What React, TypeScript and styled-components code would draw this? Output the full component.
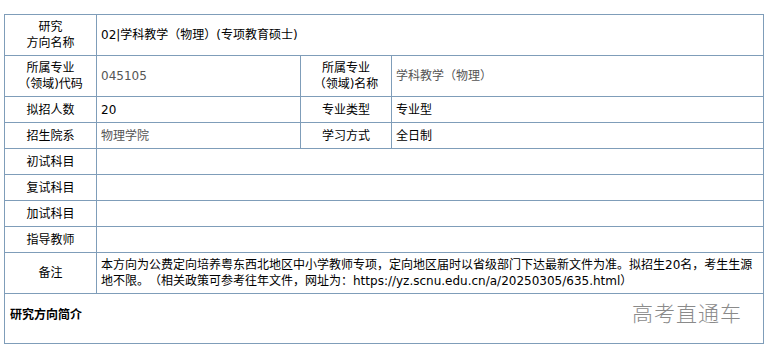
import React from 'react';
import styled, { createGlobalStyle } from 'styled-components';

const GlobalStyle = createGlobalStyle`
	html, body {
		margin: 0;
		padding: 0;
		background: #ffffff;
	}
	body {
		font-family: Verdana, 'DejaVu Sans', 'Noto Sans CJK SC', sans-serif;
		font-size: 12px;
		color: #000000;
		text-spacing-trim: space-all;
	}
`;

const BORDER = '#7f9db9';

const Page = styled.div`
	position: relative;
	padding: 14px 0 0 4px;
	width: 770px;
	box-sizing: border-box;
`;

const Table = styled.table`
	border-collapse: collapse;
	table-layout: fixed;
	width: 759px;
	font-size: 12px;
	line-height: 16px;
`;

const Row = styled.tr<{ $h: number }>`
	height: ${(p) => p.$h}px;
`;

const LabelCell = styled.td`
	border: 1px solid ${BORDER};
	text-align: center;
	vertical-align: middle;
	padding: 0 4px;
	color: #000;
`;

const ValueCell = styled.td<{ $muted?: boolean }>`
	border: 1px solid ${BORDER};
	text-align: left;
	vertical-align: middle;
	padding: 0 4px;
	color: ${(p) => (p.$muted ? '#555555' : '#000000')};
	word-break: break-all;
`;

const IntroCell = styled.td`
	border: 1px solid ${BORDER};
	vertical-align: top;
	padding: 13px 5px 0 5px;
	font-weight: bold;
	color: #000;
`;

const Watermark = styled.div`
	position: absolute;
	left: 632px;
	top: 298px;
	font-family: 'Noto Sans CJK SC', sans-serif;
	font-weight: 300;
	font-size: 21px;
	line-height: 28px;
	letter-spacing: 1px;
	color: #8a8a8a;
	pointer-events: none;
`;

const SIMPLE_ROWS = ['初试科目', '复试科目', '加试科目', '指导教师'];

const App = () => {
	return (
		<>
			<GlobalStyle />
			<Page>
				<Table>
					<colgroup>
						<col style={{ width: 92 }} />
						<col style={{ width: 204 }} />
						<col style={{ width: 91 }} />
						<col style={{ width: 372 }} />
					</colgroup>
					<tbody>
						<Row $h={41}>
							<LabelCell>
								研究
								<br />
								方向名称
							</LabelCell>
							<ValueCell colSpan={3}>02|学科教学（物理）(专项教育硕士)</ValueCell>
						</Row>
						<Row $h={41}>
							<LabelCell>
								所属专业
								<br />
								（领域)代码
							</LabelCell>
							<ValueCell $muted>045105</ValueCell>
							<LabelCell>
								所属专业
								<br />
								（领域)名称
							</LabelCell>
							<ValueCell $muted>学科教学（物理）</ValueCell>
						</Row>
						<Row $h={26}>
							<LabelCell>拟招人数</LabelCell>
							<ValueCell>20</ValueCell>
							<LabelCell>专业类型</LabelCell>
							<ValueCell>专业型</ValueCell>
						</Row>
						<Row $h={26}>
							<LabelCell>招生院系</LabelCell>
							<ValueCell $muted>物理学院</ValueCell>
							<LabelCell>学习方式</LabelCell>
							<ValueCell>全日制</ValueCell>
						</Row>
						{SIMPLE_ROWS.map((label) => (
							<Row $h={26} key={label}>
								<LabelCell>{label}</LabelCell>
								<ValueCell colSpan={3} />
							</Row>
						))}
						<Row $h={41}>
							<LabelCell>备注</LabelCell>
							<ValueCell colSpan={3}>
								本方向为公费定向培养粤东西北地区中小学教师专项，定向地区届时以省级部门下达最新文件为准。拟招生20名，考生生源地不限。（相关政策可参考往年文件，网址为：https://yz.scnu.edu.cn/a/20250305/635.html）
							</ValueCell>
						</Row>
						<Row $h={50}>
							<IntroCell colSpan={4}>研究方向简介</IntroCell>
						</Row>
					</tbody>
				</Table>
				<Watermark>高考直通车</Watermark>
			</Page>
		</>
	);
};

export default App;
